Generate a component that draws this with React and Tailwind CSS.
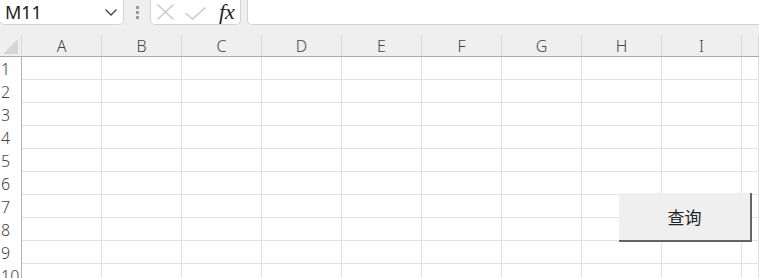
const columns = ["A", "B", "C", "D", "E", "F", "G", "H", "I", ""];
const rows = [1, 2, 3, 4, 5, 6, 7, 8, 9, 10];

const font = { fontFamily: '"Noto Sans", "Noto Sans CJK SC", sans-serif' };

function FormulaBar() {
  return (
    <div className="flex h-[25px] items-stretch bg-[#efefef]">
      <div className="-ml-px flex w-[125px] items-center justify-between rounded-b-[5px] border-x border-b border-[#d4d4d4] bg-white pl-[5px] pr-[6px]">
        <span className="pb-[1px] text-[18px] leading-none text-[#222]">M11</span>
        <svg width="12" height="7" viewBox="0 0 12 7" className="mt-[1px]">
          <polyline points="0.5,0.5 6,6 11.5,0.5" fill="none" stroke="#444" strokeWidth="1.3" />
        </svg>
      </div>
      <div className="flex w-[26px] flex-col items-center justify-center gap-[2px]">
        <span className="h-[3px] w-[3px] bg-[#9a9a9a]" />
        <span className="h-[3px] w-[3px] bg-[#9a9a9a]" />
        <span className="h-[3px] w-[3px] bg-[#9a9a9a]" />
      </div>
      <div className="flex w-[91px] items-center rounded-b-[5px] border-x border-b border-[#d4d4d4] bg-white pl-[6px]">
        <svg width="17" height="16" viewBox="0 0 17 16">
          <line x1="0.5" y1="0.5" x2="16.5" y2="15.5" stroke="#c8c8c8" strokeWidth="1.4" />
          <line x1="16.5" y1="0.5" x2="0.5" y2="15.5" stroke="#c8c8c8" strokeWidth="1.4" />
        </svg>
        <svg width="21" height="13" viewBox="0 0 21 13" className="ml-[11px] mt-[2px]">
          <polyline points="0.5,6 7.5,12 20.5,0.5" fill="none" stroke="#c8c8c8" strokeWidth="1.4" />
        </svg>
        <span
          className="ml-[13px] text-[22px] italic leading-none text-[#222]"
          style={{ fontFamily: '"Liberation Serif", serif' }}
        >
          fx
        </span>
      </div>
      <div className="ml-[6px] flex-1 rounded-bl-[5px] border-l border-b border-[#d4d4d4] bg-white" />
    </div>
  );
}

function App() {
  return (
    <div className="relative h-[278px] w-[759px] overflow-hidden bg-white" style={font}>
      <FormulaBar />
      <div className="h-[10px] bg-[#efefef]" />
      <div className="grid h-[22px] grid-cols-[22px_repeat(9,80px)_1fr] border-b border-[#ababab] bg-[#efefef]">
        <div className="relative border-r border-[#d8d8d8]">
          <div className="absolute bottom-[2px] right-[3px] h-0 w-0 border-b-[15px] border-l-[15px] border-b-[#d6d6d6] border-l-transparent" />
        </div>
        {columns.map((c, i) => (
          <div
            key={i}
            className="flex items-center justify-center border-r border-[#d8d8d8] pt-[1px] text-[16px] font-light leading-none text-[#444]"
          >
            {c}
          </div>
        ))}
      </div>
      <div className="grid auto-rows-[23px] grid-cols-[22px_repeat(9,80px)_1fr]">
        {rows.map((r) => (
          <div key={r} className="contents">
            <div className="flex items-center border-r border-[#b4b4b4] pl-[1px] text-[16px] font-light leading-none text-[#444]">
              {r}
            </div>
            {columns.map((c, i) => (
              <div key={i} className="border-r border-b border-[#e1e1e1]" />
            ))}
          </div>
        ))}
      </div>
      <button
        type="button"
        className="absolute left-[619px] top-[193px] flex h-[49px] w-[133px] items-center justify-center border-r-2 border-b-2 border-[#646464] bg-[#efefef] text-[17px] text-[#222]"
        style={{ fontFamily: '"Noto Sans CJK SC", sans-serif' }}
      >
        查询
      </button>
    </div>
  );
}

export default App;
